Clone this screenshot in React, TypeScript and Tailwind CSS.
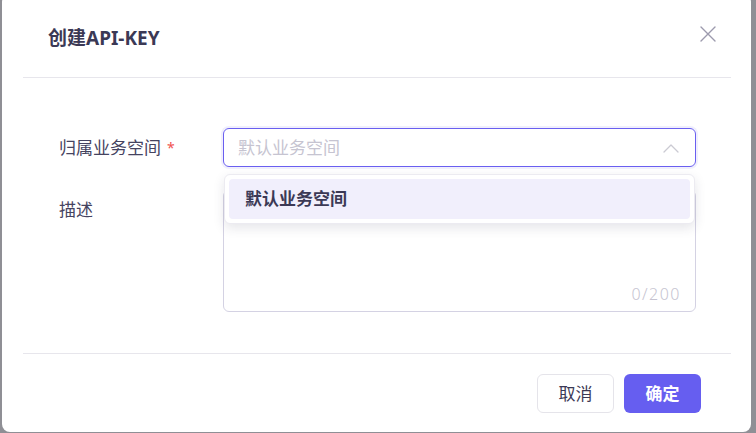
import React from "react";

const font = { fontFamily: '"Noto Sans", "Noto Sans CJK SC", sans-serif' };

function CloseIcon() {
  return (
    <svg width="16" height="16" viewBox="0 0 16 16" fill="none">
      <path d="M1 1L15 15M15 1L1 15" stroke="#9c9aad" strokeWidth="1.4" strokeLinecap="round" />
    </svg>
  );
}

function ChevronUpIcon() {
  return (
    <svg width="16" height="10" viewBox="0 0 16 10" fill="none">
      <path d="M1 9L8 2L15 9" stroke="#cbcad3" strokeWidth="1.3" strokeLinecap="round" strokeLinejoin="round" />
    </svg>
  );
}

export default function App() {
  return (
    <div
      className="w-[756px] h-[433px] overflow-hidden bg-[#8f8f95] flex pl-[2px] pr-[5px] pb-[1px]"
      style={font}
    >
      <div className="flex-1 -mt-[6px] pt-[6px] bg-white rounded-lg flex flex-col text-[#3b3955]">
        {/* header */}
        <div className="h-[77px] flex items-start justify-between pl-[46px] pr-[35px]">
          <h1 className="pt-[24px] text-[19px] leading-[28px] font-bold text-[#3b3955]">创建API-KEY</h1>
          <button className="mt-[26px] w-4 h-4 flex items-center justify-center">
            <CloseIcon />
          </button>
        </div>
        <div className="mx-[21px] mr-[20px] h-px bg-[#e7e6ec]" />

        {/* form */}
        <div className="flex-1 pt-[50px] pl-[57px] pr-[55px] flex flex-col">
          <div className="flex items-center">
            <label className="w-[164px] text-[17px] leading-6 text-[#45435f] flex items-center">
              归属业务空间
              <span className="ml-[6px] text-[#f0524f] text-[14px]">*</span>
            </label>
            <div className="relative flex-1">
              <div className="h-[39px] rounded-md border border-[#6a5ff0] shadow-[0_0_0_2px_rgba(106,95,240,0.1)] flex items-center justify-between pl-[14px] pr-[16px]">
                <span className="text-[17px] text-[#c6c4d1]">默认业务空间</span>
                <ChevronUpIcon />
              </div>
              <div className="absolute z-10 left-px right-px top-[46px] bg-white rounded-md border border-[#ecebf1] shadow-[0_4px_12px_rgba(40,40,70,0.12)] p-[4px]">
                <div className="h-[40px] rounded bg-[#f1effc] flex items-center pl-[16px] text-[17px] font-bold text-[#3b3955]">
                  默认业务空间
                </div>
              </div>
            </div>
          </div>

          <div className="flex items-start mt-[23px]">
            <label className="w-[164px] pt-[8px] text-[17px] leading-6 text-[#45435f]">描述</label>
            <div className="relative flex-1 h-[122px] rounded-md border border-[#d4d2e3]">
              <span className="absolute right-[14px] bottom-[6px] text-[16px] leading-[22px] tracking-[1.5px] font-light text-[#c6c4d1]">
                0/200
              </span>
            </div>
          </div>
        </div>

        {/* footer */}
        <div className="mx-[21px] mr-[20px] h-px bg-[#e7e6ec]" />
        <div className="h-[78px] flex items-start justify-end gap-[10px] pt-[20px] pr-[50px]">
          <button className="w-[77px] h-[39px] rounded-md border border-[#e5e4ea] bg-white text-[17px] text-[#3b3955]">
            取消
          </button>
          <button className="w-[77px] h-[39px] rounded-md bg-[#665ef0] text-[17px] font-bold text-white">
            确定
          </button>
        </div>
      </div>
    </div>
  );
}
